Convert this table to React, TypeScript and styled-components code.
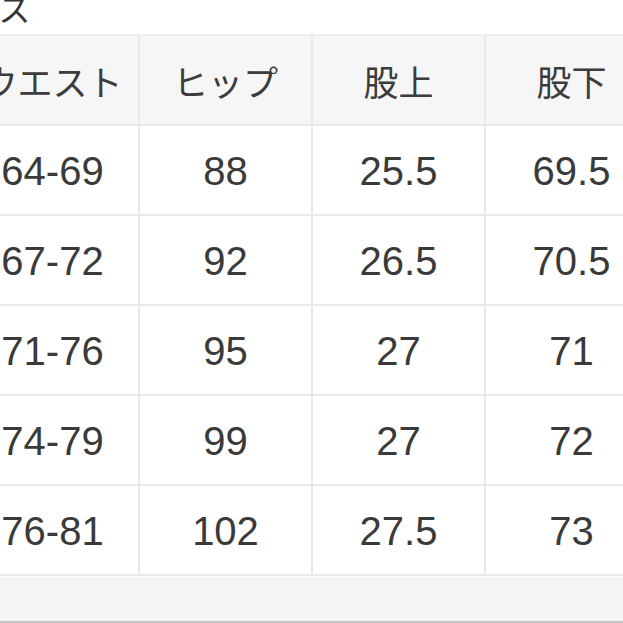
import styled, { createGlobalStyle } from "styled-components";

const GlobalStyle = createGlobalStyle`
  html, body {
    margin: 0;
    padding: 0;
    background: #ffffff;
  }
  body {
    font-family: "Liberation Sans", "Noto Sans CJK JP", sans-serif;
    color: #3a3a3a;
  }
`;

const Page = styled.div`
  width: 623px;
  height: 623px;
  overflow: hidden;
  background: #ffffff;
  display: flex;
  flex-direction: column;
`;

const Title = styled.h2`
  margin: -13px 0 0 -64px;
  height: 47px;
  font-size: 32px;
  line-height: 40px;
  font-weight: 400;
  font-family: "Noto Sans CJK JP", sans-serif;
  color: #333;
  white-space: nowrap;
`;

const Table = styled.table`
  margin-left: -35px;
  width: 694px;
  flex-shrink: 0;
  align-self: flex-start;
  border-collapse: collapse;
  table-layout: fixed;
  border-top: 2px solid #eeeeee;
`;

const HeadCell = styled.th`
  width: 171px;
  height: 88px;
  padding: 0;
  background: #f6f6f6;
  border: 2px solid #e9e9e9;
  border-top: none;
  font-family: "Noto Sans CJK JP", sans-serif;
  font-weight: 400;
  font-size: 35px;
  color: #3c3c3c;
  text-align: center;
  vertical-align: middle;
`;

const Cell = styled.td`
  height: 86px;
  padding: 2px 0 0;
  background: #ffffff;
  border: 2px solid #e9e9e9;
  font-family: "Liberation Sans", Arial, sans-serif;
  font-size: 40px;
  color: #3a3a3a;
  text-align: center;
  vertical-align: middle;
`;

const Footer = styled.div`
  flex: 1;
  background: #f4f4f4;
  border-top: 1px solid #ffffff;
  border-bottom: 2px solid #c4c4c4;
`;

const headers = ["ウエスト", "ヒップ", "股上", "股下"];

const rows = [
  ["64-69", "88", "25.5", "69.5"],
  ["67-72", "92", "26.5", "70.5"],
  ["71-76", "95", "27", "71"],
  ["74-79", "99", "27", "72"],
  ["76-81", "102", "27.5", "73"],
];

export default function App() {
  return (
    <Page>
      <GlobalStyle />
      <Title>サイズ</Title>
      <Table>
        <thead>
          <tr>
            {headers.map((h) => (
              <HeadCell key={h}>{h}</HeadCell>
            ))}
          </tr>
        </thead>
        <tbody>
          {rows.map((r) => (
            <tr key={r[0]}>
              {r.map((v, i) => (
                <Cell key={i}>{v}</Cell>
              ))}
            </tr>
          ))}
        </tbody>
      </Table>
      <Footer />
    </Page>
  );
}
